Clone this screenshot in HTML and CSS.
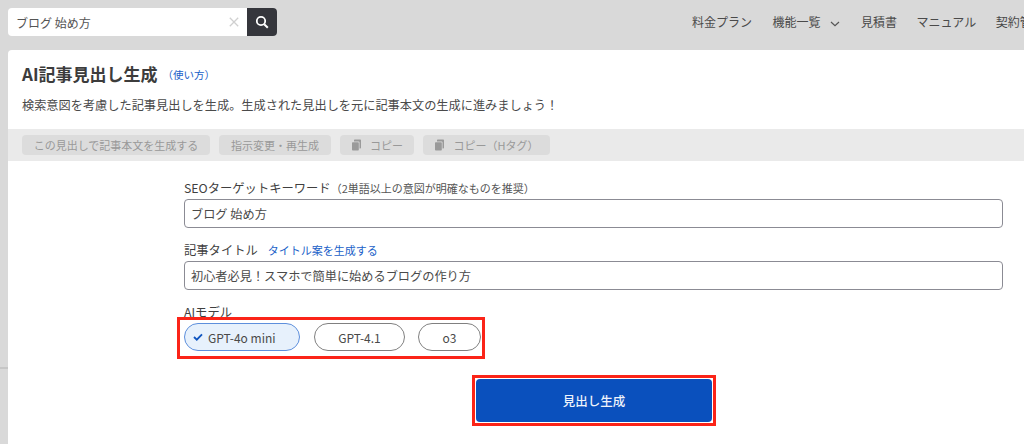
FILE: index.html
```html
<!DOCTYPE html>
<html lang="ja">
<head>
<meta charset="utf-8">
<title>AI記事見出し生成</title>
<link rel="stylesheet" href="styles.css">
</head>
<body>
<header class="topbar">
  <div class="search">
    <span class="search-text">ブログ 始め方</span>
    <svg class="search-clear" width="10" height="10" viewBox="0 0 10 10"><path d="M.8.8l8.400 8.400M9.200.8L.8 9.200" stroke="#d0d0d0" stroke-width="1.300" fill="none"/></svg>
    <span class="search-btn"><svg width="14" height="14" viewBox="0 0 14 14"><circle cx="6" cy="6" r="4.200" stroke="#fff" stroke-width="1.800" fill="none"/><path d="M9.200 9.200l3.600 3.600" stroke="#fff" stroke-width="2" fill="none"/></svg></span>
  </div>
  <nav class="nav">
    <span>料金プラン</span>
    <span class="nav-drop">機能一覧<svg width="10" height="6" viewBox="0 0 10 6"><path d="M1 1l4 3.600L9 1" stroke="#555" stroke-width="1.200" fill="none"/></svg></span>
    <span>見積書</span>
    <span>マニュアル</span>
    <span>契約管理</span>
  </nav>
</header>
<span class="edge-line"></span>
<main class="panel">
  <div class="intro">
    <div class="title-row">
      <h1>AI記事見出し生成</h1>
      <a class="howto">（使い方）</a>
    </div>
    <p class="lead">検索意図を考慮した記事見出しを生成。生成された見出しを元に記事本文の生成に進みましょう！</p>
  </div>
  <div class="toolbar">
    <span class="tool tool-a">この見出しで記事本文を生成する</span>
    <span class="tool tool-b">指示変更・再生成</span>
    <span class="tool tool-c"><svg width="11" height="12" viewBox="0 0 11 12"><path d="M3 2.500V1.200C3 .8 3.300.5 3.700.5h5.600c.4 0 .7.3.7.7v7.600c0 .4-.3.7-.7.7H8.500V3.300c0-.5-.3-.8-.8-.8z" fill="#9a9a9a"/><rect x="1" y="3.200" width="6.800" height="8.300" rx=".8" fill="#9a9a9a"/></svg>コピー</span>
    <span class="tool tool-d"><svg width="11" height="12" viewBox="0 0 11 12"><path d="M3 2.500V1.200C3 .8 3.300.5 3.700.5h5.600c.4 0 .7.3.7.7v7.600c0 .4-.3.7-.7.7H8.500V3.300c0-.5-.3-.8-.8-.8z" fill="#9a9a9a"/><rect x="1" y="3.200" width="6.800" height="8.300" rx=".8" fill="#9a9a9a"/></svg>コピー（Hタグ）</span>
  </div>
  <form class="form">
    <div class="label">SEOターゲットキーワード<small class="hint">（2単語以上の意図が明確なものを推奨）</small></div>
    <div class="field">ブログ 始め方</div>
    <div class="label label-gap">記事タイトル<a class="link">タイトル案を生成する</a></div>
    <div class="field">初心者必見！スマホで簡単に始めるブログの作り方</div>
    <div class="label label-gap">AIモデル</div>
    <div class="models">
      <span class="pill pill-on"><svg width="10" height="8" viewBox="0 0 10 8"><path d="M1 4l2.800 2.700L9 1.300" stroke="#0f55c0" stroke-width="1.800" fill="none"/></svg>GPT-4o mini</span>
      <span class="pill pill-41">GPT-4.1</span>
      <span class="pill pill-o3">o3</span>
    </div>
    <div class="submit-wrap"><span class="submit">見出し生成</span></div>
  </form>
</main>
</body>
</html>
```
FILE: styles.css
```css
* { box-sizing: border-box; }
html, body { margin: 0; height: 444px; overflow: hidden; }
body {
  background: #d9d9d9;
  color: #444;
  font-family: "Noto Sans CJK JP", "Noto Sans", sans-serif;
  position: relative;
}
.topbar {
  height: 50px;
  display: flex;
  justify-content: space-between;
  padding: 8px 0 0 8px;
  white-space: nowrap;
}
.search {
  width: 269px;
  height: 28px;
  background: #fff;
  border-radius: 4px;
  display: flex;
  align-items: center;
  font-size: 12px;
  padding-left: 8px;
  overflow: hidden;
}
.search-text { flex: 1; color: #555; }
.search-clear { margin-right: 8px; }
.search-btn {
  width: 30px;
  height: 28px;
  background: #35363c;
  display: flex;
  align-items: center;
  justify-content: center;
}
.nav {
  display: flex;
  align-items: flex-start;
  gap: 19.500px;
  font-size: 12px;
  line-height: 16px;
  padding-top: 6px;
  width: 332px;
  flex: none;
  overflow: hidden;
  color: #4a4a4a;
}
.nav-drop { display: flex; align-items: center; gap: 9px; height: 16px; margin: 0 2px 0 1px; }
.nav-drop svg { margin-top: 3px; }
.edge-line {
  position: absolute;
  left: 0;
  top: 367px;
  width: 8px;
  height: 2px;
  background: #c6c6c6;
}
.panel {
  margin-left: 8px;
  height: 394px;
  background: #fff;
  border-radius: 4px 0 0 0;
}
.intro { height: 79px; padding: 12px 0 0 14px; }
.title-row { display: flex; align-items: center; height: 24px; }
h1 { margin: 0; font-size: 17px; font-weight: 700; color: #3c3c3c; line-height: 24px; }
.howto { font-size: 10.500px; color: #1a5fc8; margin-left: 5px; }
.lead { margin: 10px 0 0; font-size: 12.200px; line-height: 18px; color: #4a4a4a; }
.toolbar {
  height: 32px;
  background: #eaeaea;
  padding: 6px 0 0 14px;
  display: flex;
  gap: 9px;
}
.tool {
  height: 20px;
  background: #dcdcdc;
  border-radius: 4px;
  color: #999;
  font-size: 11px;
  line-height: 20px;
  display: flex;
  align-items: center;
  justify-content: center;
  white-space: nowrap;
  gap: 8px;
}
.tool-a { width: 188px; }
.tool-b { width: 112px; }
.tool-c { width: 74px; }
.tool-d { width: 127px; }
.form { padding: 19px 21px 0 176px; }
.label {
  font-size: 12.300px;
  line-height: 16px;
  color: #3f3f3f;
  height: 19px;
  white-space: nowrap;
}
.label-gap { margin-top: 14px; }
.hint { font-size: 11px; color: #555; }
.link { font-size: 11px; color: #1a5fc8; margin-left: 10px; }
.field {
  height: 29px;
  border: 1px solid #8b8b94;
  border-radius: 4px;
  padding: 0 6px;
  font-size: 12.200px;
  line-height: 28px;
  color: #4a4a4a;
}
.models {
  display: flex;
  width: 308px;
  height: 42px;
  margin: -6px 0 0 -7px;
  padding: 6px 0 0 7px;
  outline: 3px solid #fb2418;
  outline-offset: -3px;
  position: relative;
}
.pill {
  height: 28px;
  border: 1px solid #808080;
  border-radius: 14px;
  font-size: 12px;
  color: #4a4a4a;
  display: flex;
  align-items: center;
  justify-content: center;
  flex: none;
}
.pill-on {
  width: 116px;
  background: #e7f1fc;
  border-color: #5d8fdc;
  justify-content: flex-start;
  padding-left: 8px;
  gap: 5px;
}
.pill-41 { width: 91px; margin-left: 14px; }
.pill-o3 { width: 63px; margin-left: 13px; }
.submit-wrap {
  width: 244px;
  height: 51px;
  margin: 16px 0 0 288px;
  border: 3px solid #fb2418;
  padding: 1px;
}
.submit {
  display: flex;
  align-items: center;
  justify-content: center;
  height: 100%;
  background: #0a50bd;
  border-radius: 4px;
  color: #eef3fb;
  font-size: 12.500px;
  font-weight: 500;
}
```
